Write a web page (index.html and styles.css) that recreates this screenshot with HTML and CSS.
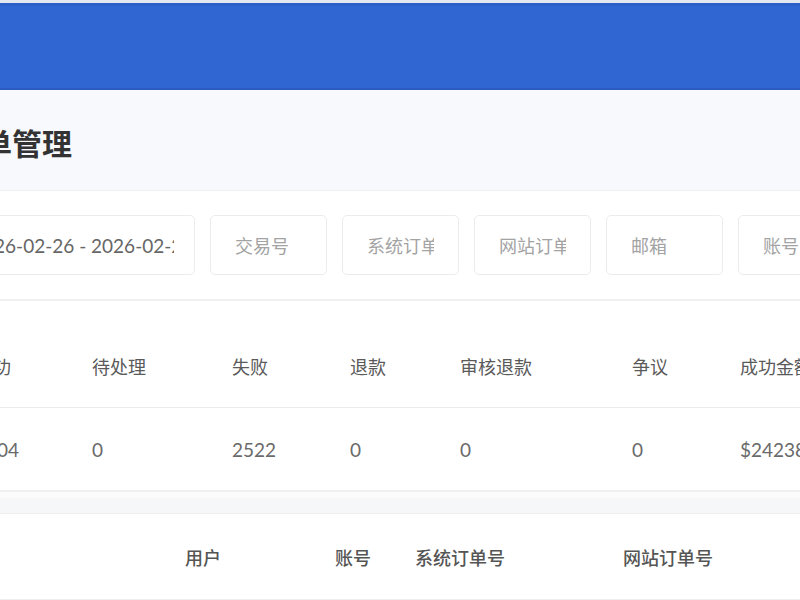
FILE: index.html
```html
<!DOCTYPE html>
<html lang="zh-CN">
<head>
<meta charset="utf-8">
<title>订单管理</title>
<link rel="stylesheet" href="styles.css">
</head>
<body>
<div class="topstrip"></div>
<header class="navbar"></header>
<main class="shift">
  <section class="page-head">
    <h1 class="title">订单管理</h1>
  </section>
  <section class="filters">
    <div class="field field-date"><span class="value">2026-02-26 - 2026-02-26</span></div>
    <div class="field"><span class="ph">交易号</span></div>
    <div class="field"><span class="ph">系统订单号</span></div>
    <div class="field"><span class="ph">网站订单号</span></div>
    <div class="field"><span class="ph">邮箱</span></div>
    <div class="field"><span class="ph">账号</span></div>
  </section>
  <section class="stats">
    <div class="srow shead">
      <div>成功</div><div>待处理</div><div>失败</div><div>退款</div><div>审核退款</div><div>争议</div><div>成功金额</div>
    </div>
    <div class="srow sdata">
      <div>3504</div><div>0</div><div>2522</div><div>0</div><div>0</div><div>0</div><div>$242380.00</div>
    </div>
  </section>
  <div class="gap"></div>
  <section class="orders">
    <div class="orow">
      <div></div><div>用户</div><div>账号</div><div>系统订单号</div><div>网站订单号</div>
    </div>
  </section>
</main>
</body>
</html>
```
FILE: styles.css
```css
* { box-sizing: border-box; }
html, body { margin: 0; padding: 0; }
body {
  width: 800px;
  height: 600px;
  overflow: hidden;
  background: #ffffff;
  font-family: Lato, "Noto Sans CJK SC", sans-serif;
  color: #555;
}
.topstrip { height: 3px; background: #e3e8f1; }
.navbar {
  height: 87px;
  background: #3066d1;
  border-top: 3px solid #2c5fc7;
  border-bottom: 2px solid #2b5cbf;
}
.shift { margin-left: -60px; width: 900px; }
.page-head {
  height: 101px;
  background: #f8f9fc;
  border-bottom: 1px solid #eef0f4;
  display: flex;
  align-items: center;
  padding-left: 12px;
}
.title {
  margin: 0;
  font-size: 30px;
  font-weight: 700;
  color: #333;
  position: relative;
  top: 2px;
}
.filters {
  display: flex;
  gap: 15px;
  padding: 24px 0 24px 28px;
  border-bottom: 2px solid #efefef;
}
.field {
  width: 117px;
  height: 60px;
  flex: none;
  border: 1px solid #ececec;
  border-radius: 5px;
  padding: 0 24px;
  display: flex;
  align-items: center;
  overflow: hidden;
  white-space: nowrap;
  font-size: 18px;
}
.field-date { width: 227px; padding: 0 20px 0 3px; }
.field .value { color: #666; font-size: 19px; overflow: hidden; }
.field .ph { color: #a3a3a3; overflow: hidden; }
.stats { padding: 24px 0 0 35px; border-bottom: 2px solid #efefef; }
.srow {
  display: grid;
  grid-template-columns: 117px 140px 118px 110px 172px 108px 200px;
  align-items: center;
  font-size: 18px;
  white-space: nowrap;
}
.shead { height: 83px; color: #5a5a5a; font-weight: 400; border-bottom: 1px solid #ececec; }
.sdata { height: 82px; color: #6a6a6a; font-size: 19px; }
.gap {
  height: 22px;
  background: #f6f7f9;
  border-top: 6px solid #fbfbfc;
  border-bottom: 1px solid #eeeeee;
}
.orders { padding-left: 35px; }
.orow {
  display: grid;
  grid-template-columns: 210px 150px 80px 208px 200px;
  height: 86px;
  align-items: center;
  font-size: 18px;
  font-weight: 500;
  color: #555;
  border-bottom: 1px solid #eeeeee;
}
```
